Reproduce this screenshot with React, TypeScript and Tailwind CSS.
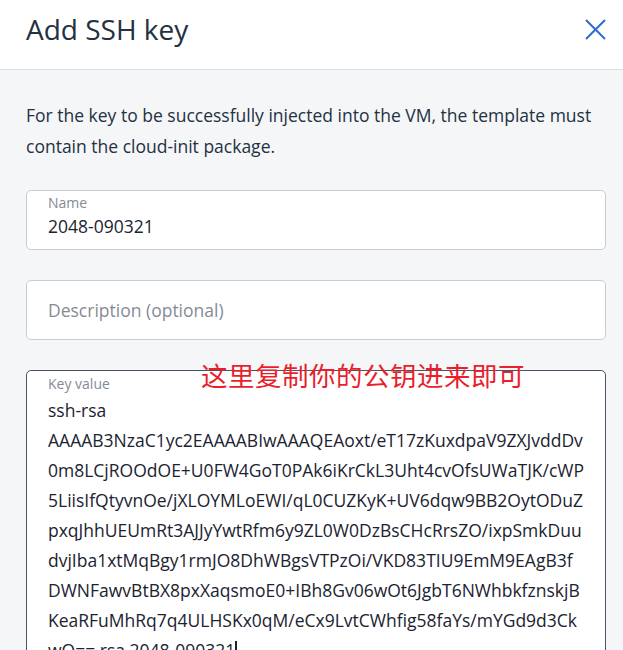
import React from 'react';

const keyLines = [
    "ssh-rsa",
    "AAAAB3NzaC1yc2EAAAABIwAAAQEAoxt/eT17zKuxdpaV9ZXJvddDv",
    "0m8LCjROOdOE+U0FW4GoT0PAk6iKrCkL3Uht4cvOfsUWaTJK/cWP",
    "5LiisIfQtyvnOe/jXLOYMLoEWI/qL0CUZKyK+UV6dqw9BB2OytODuZ",
    "pxqJhhUEUmRt3AJJyYwtRfm6y9ZL0W0DzBsCHcRrsZO/ixpSmkDuu",
    "dvjIba1xtMqBgy1rmJO8DhWBgsVTPzOi/VKD83TIU9EmM9EAgB3f",
    "DWNFawvBtBX8pxXaqsmoE0+IBh8Gv06wOt6JgbT6NWhbkfznskjB",
    "KeaRFuMhRq7q4ULHSKx0qM/eCx9LvtCWhfig58faYs/mYGd9d3Ck",
];

const App = () => {
    return (
        <div className="w-[623px] h-[650px] overflow-hidden bg-[#f5f6f8] text-[#243142] font-['Open_Sans',sans-serif]">
            <div className="h-[70px] bg-white border-b border-[#dcdfe3] flex items-center justify-between pl-[26px] pr-[16px]">
                <h2 className="text-[28px] leading-none pb-[12px]">Add SSH key</h2>
                <button className="w-[24px] h-[24px] flex items-center justify-center mb-[10px]">
                    <svg width="21" height="21" viewBox="0 0 21 21" fill="none" stroke="#2e6bd2" strokeWidth="2">
                        <path d="M1 1 L20 20 M20 1 L1 20" />
                    </svg>
                </button>
            </div>

            <div className="px-[26px] pt-[30px] pr-[17px]">
                <p className="text-[17.5px] leading-[31px]">
                    For the key to be successfully injected into the VM, the template must contain the cloud-init package.
                </p>

                <div className="mt-[28px] h-[60px] bg-white border border-[#c9cdd3] rounded-[5px] px-[21px] pt-[2px]">
                    <div className="text-[14px] leading-[20px] text-[#858b94]">Name</div>
                    <div className="text-[17.5px] leading-[26px] text-[#1b2330]">2048-090321</div>
                </div>

                <div className="mt-[30px] h-[60px] bg-white border border-[#c9cdd3] rounded-[5px] px-[21px] flex items-center">
                    <div className="text-[17.5px] text-[#858b94]">Description (optional)</div>
                </div>

                <div className="relative mt-[30px] h-[300px] bg-white border border-[#4a5361] rounded-[5px] pl-[21px] pt-[3px]">
                    <div className="text-[14px] leading-[20px] text-[#858b94]">Key value</div>
                    <div className="mt-[1px] text-[17.5px] leading-[30px] text-[#1b2330] whitespace-pre">
                        {keyLines.map((line) => (
                            <div key={line}>{line}</div>
                        ))}
                        <div>wO== rsa 2048-090321<span className="inline-block w-[2px] h-[22px] bg-[#1b2330] align-middle" /></div>
                    </div>
                    <div className="absolute left-[174px] top-[-12px] text-[26.5px] leading-[32px] text-[#ea1f2c] font-['Noto_Sans_CJK_SC',sans-serif] tracking-[0.5px]">
                        这里复制你的公钥进来即可
                    </div>
                </div>
            </div>
        </div>
    );
};

export default App;
